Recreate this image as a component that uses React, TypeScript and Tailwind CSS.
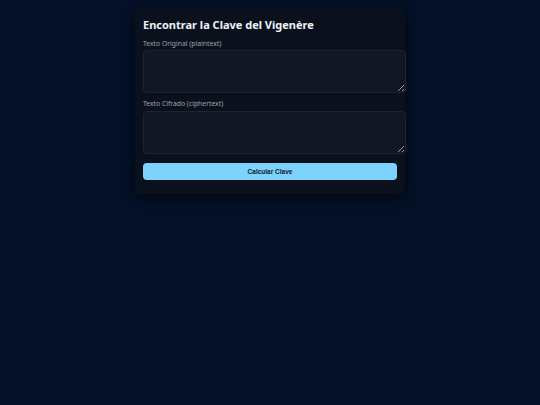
export default function App() {
  return (
    <div className="min-h-[405px] bg-[#031026] pt-[8px] font-['Noto_Sans',sans-serif]">
      <div className="mx-auto w-[270px] rounded-[5px] bg-[#0b111c] px-[8px] pb-[14px] pt-[9px] shadow-[0_4px_12px_rgba(0,0,0,0.5)]">
        <h2 className="mb-[7px] text-[11px] font-bold leading-[15px] text-[#eef2f7]">
          Encontrar la Clave del Vigenère
        </h2>
        <label className="mb-[1px] block text-[6.8px] leading-[10px] text-[#9ca3af]">
          Texto Original (plaintext)
        </label>
        <textarea className="block h-[43px] w-[263px] resize-y rounded-[4px] border border-[#1c2433] bg-[#111724] text-[#e5e7eb]" />
        <label className="mb-[2px] mt-[6px] block text-[6.8px] leading-[10px] text-[#9ca3af]">
          Texto Cifrado (ciphertext)
        </label>
        <textarea className="block h-[43px] w-[263px] resize-y rounded-[4px] border border-[#1c2433] bg-[#111724] text-[#e5e7eb]" />
        <button
          type="button"
          className="mt-[9px] block h-[17px] w-[254px] rounded-[4px] bg-[#7dd3fc] font-['Liberation_Sans',sans-serif] text-[6.5px] font-bold text-[#0b1a2e]"
        >
          Calcular Clave
        </button>
      </div>
    </div>
  );
}
